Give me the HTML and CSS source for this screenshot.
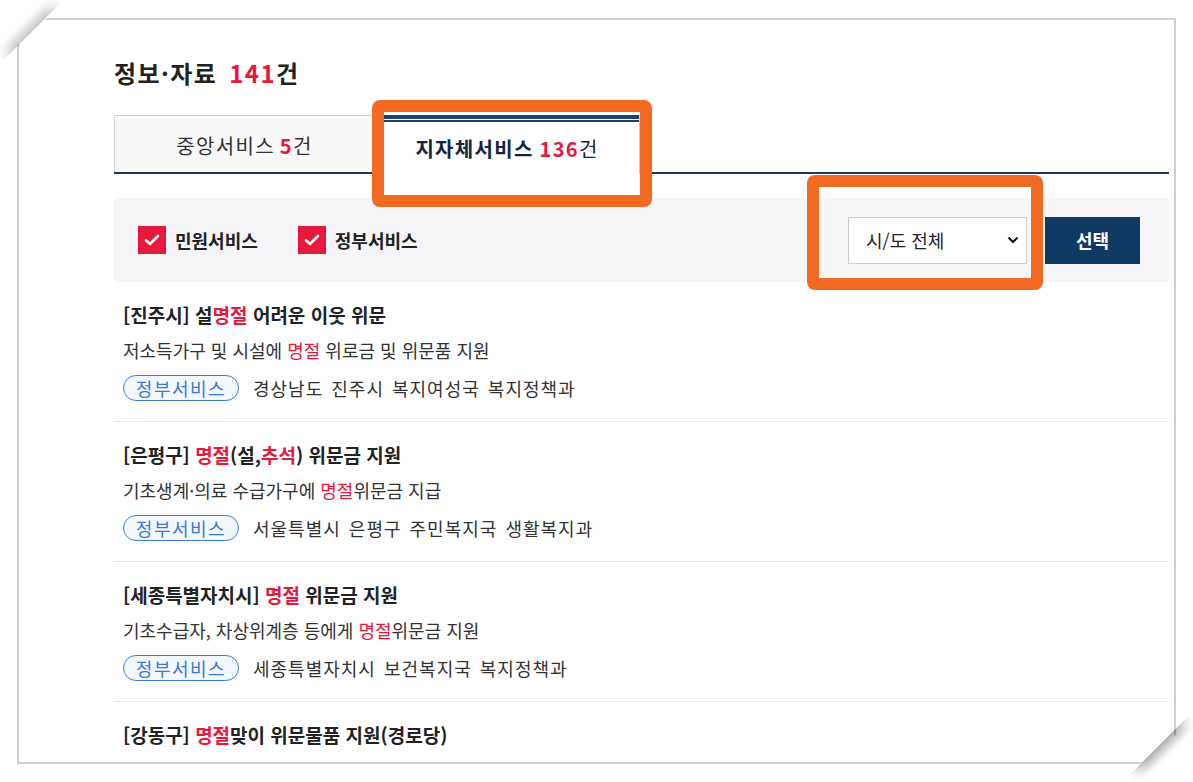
FILE: index.html
```html
<!DOCTYPE html>
<html lang="ko">
<head>
<meta charset="utf-8">
<title>정보·자료</title>
<link rel="stylesheet" href="styles.css">
</head>
<body>
<div class="paper">
  <h2 class="page-title">정보·자료 <em class="num">141</em>건</h2>

  <div class="tabs">
    <div class="tab">중앙서비스 <b class="num">5</b>건</div>
    <div class="tab active"><strong>지자체서비스</strong> <b class="num">136</b>건</div>
  </div>

  <div class="filter">
    <label class="check first"><span class="box"><svg width="16" height="12" viewBox="0 0 16 12"><path d="M2 6.2 L6 10 L14 2" fill="none" stroke="#fff" stroke-width="2.6" stroke-linecap="round" stroke-linejoin="round"/></svg></span>민원서비스</label>
    <label class="check"><span class="box"><svg width="16" height="12" viewBox="0 0 16 12"><path d="M2 6.2 L6 10 L14 2" fill="none" stroke="#fff" stroke-width="2.6" stroke-linecap="round" stroke-linejoin="round"/></svg></span>정부서비스</label>
    <div class="select">시/도 전체<svg class="chev" width="12" height="8" viewBox="0 0 12 8"><path d="M1.5 1.5 L6 6 L10.5 1.5" fill="none" stroke="#111" stroke-width="2.2"/></svg></div>
    <button class="btn">선택</button>
  </div>

  <ul class="list">
    <li class="item">
      <p class="title">[진주시] 설<span class="hl">명절</span> 어려운 이웃 위문</p>
      <p class="desc">저소득가구 및 시설에 <span class="hl">명절</span> 위로금 및 위문품 지원</p>
      <div class="meta"><span class="tag">정부서비스</span><span class="dept">경상남도 진주시 복지여성국 복지정책과</span></div>
    </li>
    <li class="item">
      <p class="title">[은평구] <span class="hl">명절</span>(설,<span class="hl">추석</span>) 위문금 지원</p>
      <p class="desc">기초생계·의료 수급가구에 <span class="hl">명절</span>위문금 지급</p>
      <div class="meta"><span class="tag">정부서비스</span><span class="dept">서울특별시 은평구 주민복지국 생활복지과</span></div>
    </li>
    <li class="item">
      <p class="title">[세종특별자치시] <span class="hl">명절</span> 위문금 지원</p>
      <p class="desc">기초수급자, 차상위계층 등에게 <span class="hl">명절</span>위문금 지원</p>
      <div class="meta"><span class="tag">정부서비스</span><span class="dept">세종특별자치시 보건복지국 복지정책과</span></div>
    </li>
    <li class="item">
      <p class="title">[강동구] <span class="hl">명절</span>맞이 위문물품 지원(경로당)</p>
      <p class="desc">관내 경로당 이용 어르신에게 <span class="hl">명절</span>맞이 위문물품 지원</p>
      <div class="meta"><span class="tag">정부서비스</span><span class="dept">서울특별시 강동구 복지정책과</span></div>
    </li>
  </ul>
</div>

<div class="fold fold-tl"></div>
<div class="fold fold-br"></div>
<div class="mark mark-tab"></div>
<div class="mark mark-select"></div>
</body>
</html>
```

FILE: styles.css
```css
* { box-sizing: border-box; }

html, body {
  margin: 0;
  padding: 0;
  background: #fff;
}

body {
  position: relative;
  width: 1193px;
  height: 782px;
  overflow: hidden;
  font-family: "Noto Sans CJK KR", "Noto Sans", sans-serif;
  color: #222;
}

.paper {
  position: absolute;
  left: 17px;
  top: 18px;
  width: 1159px;
  height: 746px;
  border: 2px solid #cfcfcf;
  background: #fff;
  overflow: hidden;
  padding: 38px 5px 0 95px;
  clip-path: polygon(30px 0, 100% 0, 100% 717px, 1123px 100%, 0 100%, 0 27px);
}

.page-title {
  margin: 0 0 27px;
  font-size: 24px;
  line-height: 30px;
  font-weight: 700;
  color: #222;
  letter-spacing: 1.4px;
  word-spacing: 4px;
}

.num {
  color: #e8173e;
  font-style: normal;
  font-weight: 700;
}

/* tabs */
.tabs {
  display: flex;
  height: 59px;
  border-bottom: 2px solid #1c3660;
}

.tab {
  width: 261px;
  height: 57px;
  display: flex;
  align-items: center;
  justify-content: center;
  padding-top: 2px;
  background: #f8f8f8;
  border: 1px solid #cfcfcf;
  border-bottom: 0;
  font-size: 20px;
  color: #333;
  letter-spacing: 1.3px;
}

.tab .num { margin-left: 5px; }

.tab.active {
  width: 265px;
  height: 59px;
  margin-bottom: -2px;
  padding-top: 8px;
  background:
    linear-gradient(#1f3f6e 0 4px, #fff 4px 5px, #1f3f6e 5px 7px, #fff 7px) no-repeat;
  border: 0;
  border-right: 1px solid #cfcfcf;
  color: #222;
}

.tab.active strong { color: #14263d; font-weight: 700; }
.tab.active .num { margin-left: 6px; }

/* filter */
.filter {
  margin-top: 24px;
  height: 84px;
  background: #f6f6f9;
  display: flex;
  align-items: center;
  padding: 0 29px 0 24px;
}

.check {
  display: flex;
  align-items: center;
  gap: 9px;
  font-size: 18px;
  font-weight: 700;
  color: #222;
}

.check.first { margin-right: 40px; }

.box {
  width: 28px;
  height: 28px;
  background: #e8173e;
  display: flex;
  align-items: center;
  justify-content: center;
}

.select {
  margin-left: auto;
  width: 179px;
  height: 47px;
  background: #fff;
  border: 1px solid #cccccc;
  display: flex;
  align-items: center;
  padding: 0 7px 0 17px;
  font-size: 18px;
  color: #222;
}

.chev { margin-left: auto; }

.btn {
  margin-left: 18px;
  width: 95px;
  height: 47px;
  border: 0;
  background: #0f3a63;
  color: #fff;
  font-family: inherit;
  font-size: 18px;
  font-weight: 700;
}

/* list */
.list {
  list-style: none;
  margin: 0;
  padding: 0;
}

.item {
  padding: 21px 9px 20px;
  border-bottom: 1px solid #e6e6e6;
}

.item p { margin: 0; }

.title {
  font-size: 19px;
  line-height: 24px;
  font-weight: 700;
  color: #222;
}

.desc {
  margin-top: 11px !important;
  font-size: 18px;
  line-height: 24px;
  color: #333;
}

.hl { color: #e8173e; }

.meta {
  margin-top: 13px;
  display: flex;
  align-items: center;
  height: 26px;
}

.tag {
  height: 26px;
  width: 116px;
  border: 1px solid #3d7fdc;
  border-radius: 13px;
  background: #f3f8ff;
  color: #3a78d4;
  font-size: 18px;
  display: flex;
  align-items: center;
  justify-content: center;
  letter-spacing: 1.5px;
}

.dept {
  margin-left: 14px;
  font-size: 18px;
  color: #333;
  letter-spacing: 1px;
  word-spacing: 2px;
}

/* page curl shadows */
.fold {
  position: absolute;
  width: 84px;
  height: 14px;
  transform: rotate(-45deg);
  -webkit-mask-image: linear-gradient(to right, transparent, #000 25%, #000 75%, transparent);
  mask-image: linear-gradient(to right, transparent, #000 25%, #000 75%, transparent);
}

.fold-tl {
  left: -15px;
  top: 20px;
  background: linear-gradient(to top, rgba(0,0,0,0.22), rgba(0,0,0,0));
}

.fold-br {
  left: 1122px;
  top: 743px;
  background: linear-gradient(to bottom, rgba(0,0,0,0.32), rgba(0,0,0,0));
}

/* orange annotation boxes */
.mark {
  position: absolute;
  border: 12px solid #f26922;
  border-radius: 8px;
}

.mark-tab {
  left: 372px;
  top: 100px;
  width: 280px;
  height: 107px;
}

.mark-select {
  left: 807px;
  top: 175px;
  width: 236px;
  height: 115px;
}
```
